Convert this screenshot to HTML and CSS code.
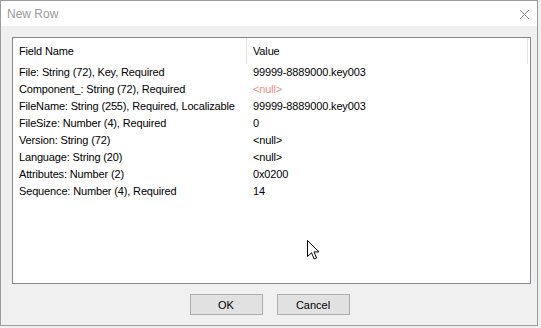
FILE: index.html
```html
<!DOCTYPE html>
<html lang="en">
<head>
  <meta charset="UTF-8" />
  <title>New Row</title>
  <link rel="stylesheet" href="styles.css">
</head>
<body>

  <div class="window">
    <div class="titlebar">
      <span class="title">New Row</span>
      <svg class="close" width="11" height="11" viewBox="0 0 11 11">
        <path d="M1 1 L10 10 M10 1 L1 10" stroke="#8a8a8a" stroke-width="1" fill="none"/>
      </svg>
    </div>

    <div class="client">
      <div class="list">
        <div class="header">
          <div class="col name">Field Name</div>
          <div class="col value">Value</div>
        </div>
        <div class="rows">
          <div class="row"><div class="col name">File: String (72), Key, Required</div><div class="col value">99999-8889000.key003</div></div>
          <div class="row"><div class="col name">Component_: String (72), Required</div><div class="col value null">&lt;null&gt;</div></div>
          <div class="row"><div class="col name">FileName: String (255), Required, Localizable</div><div class="col value">99999-8889000.key003</div></div>
          <div class="row"><div class="col name">FileSize: Number (4), Required</div><div class="col value">0</div></div>
          <div class="row"><div class="col name">Version: String (72)</div><div class="col value">&lt;null&gt;</div></div>
          <div class="row"><div class="col name">Language: String (20)</div><div class="col value">&lt;null&gt;</div></div>
          <div class="row"><div class="col name">Attributes: Number (2)</div><div class="col value">0x0200</div></div>
          <div class="row"><div class="col name">Sequence: Number (4), Required</div><div class="col value">14</div></div>
        </div>
      </div>

      <div class="buttons">
        <button>OK</button>
        <button>Cancel</button>
      </div>
    </div>

    <svg class="cursor" width="13" height="20" viewBox="0 0 13 20">
      <path d="M0.5 0.5 L0.5 16.5 L4.5 12.8 L7.2 19 L9.6 18 L7 11.9 L12 11.9 Z" fill="#fff" stroke="#000" stroke-width="1" stroke-linejoin="miter"/>
    </svg>
  </div>

</body>
</html>
```

FILE: styles.css
```css
body {
  margin: 0;
  background: #f0f0f0;
  font-family: 'Liberation Sans', Arial, sans-serif;
  font-size: 11px;
  letter-spacing: -0.15px;
  color: #000;
}

.window {
  position: relative;
  box-sizing: border-box;
  width: 538px;
  height: 326px;
  border: 1px solid #9c9c9c;
  background: #f0f0f0;
}

.titlebar {
  height: 25px;
  background: #fff;
  display: flex;
  align-items: center;
  justify-content: space-between;
  padding: 0 7px 0 6px;
}

.title {
  color: #9a9a9a;
  font-size: 12px;
  letter-spacing: 0;
}

.close {
  margin-top: 1px;
}

.client {
  padding: 11px 6px 0 11px;
}

.list {
  box-sizing: border-box;
  height: 247px;
  border: 1px solid #828790;
  background: #fff;
}

.header {
  display: flex;
  height: 26px;
  align-items: center;
  margin-right: 2px;
  border-right: 1px solid #e5e5e5;
}

.header .name {
  border-right: 1px solid #e5e5e5;
  height: 26px;
  line-height: 26px;
}

.row {
  display: flex;
  height: 17px;
  line-height: 17px;
}

.col {
  box-sizing: border-box;
  white-space: nowrap;
}

.col.name {
  width: 234px;
  padding-left: 6px;
}

.col.value {
  padding-left: 6px;
}

.col.null {
  color: #f08c8c;
}

.buttons {
  display: flex;
  justify-content: center;
  gap: 14px;
  margin-top: 10px;
  padding-right: 4px;
}

button {
  box-sizing: border-box;
  width: 73px;
  height: 21px;
  background: #e1e1e1;
  border: 1px solid #adadad;
  font-family: 'Liberation Sans', Arial, sans-serif;
  font-size: 11px;
  color: #000;
  padding: 0;
}

.cursor {
  position: absolute;
  left: 306px;
  top: 239px;
}
```
